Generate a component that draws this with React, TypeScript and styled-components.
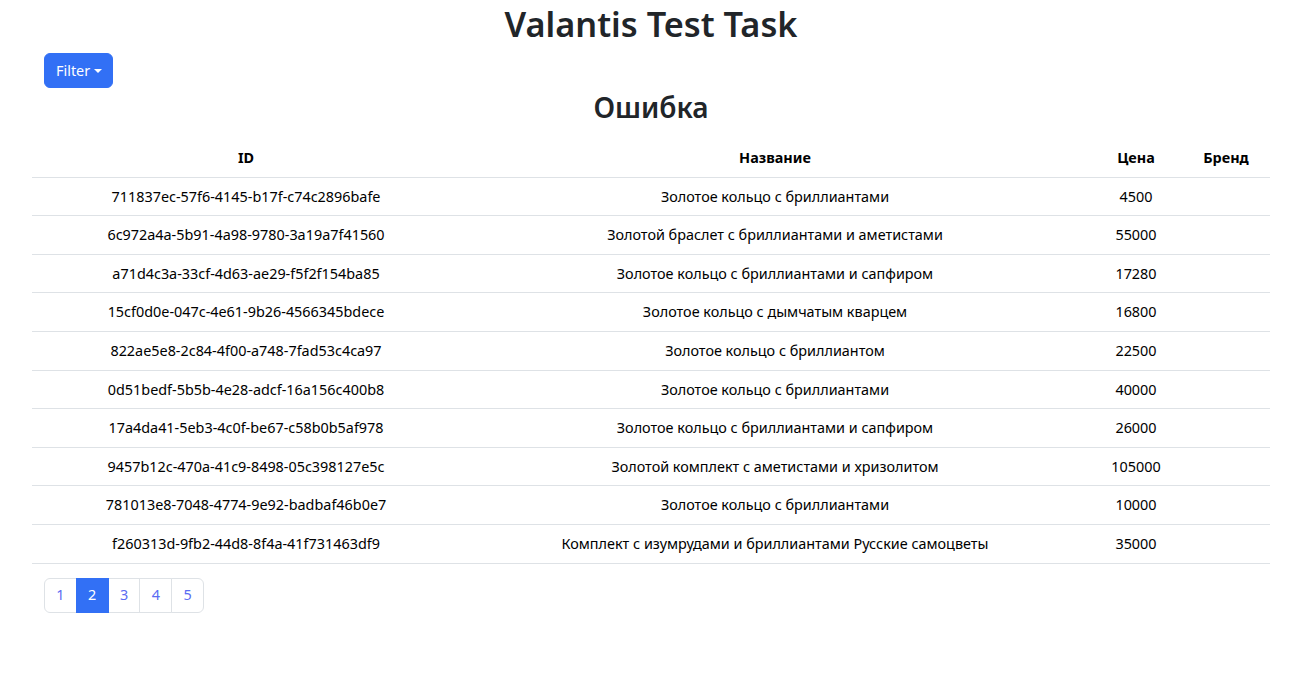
import React from "react";
import styled, { createGlobalStyle } from "styled-components";

const Global = createGlobalStyle`
  html, body { margin: 0; padding: 0; background: #fff; }
  body {
    font-family: "Noto Sans", "Open Sans", sans-serif;
    color: #212529;
    font-size: 14.4px;
    line-height: 1.5;
  }
  * { box-sizing: border-box; }
`;

const Page = styled.div`
  padding: 0 37px 0 32px;
`;

const Title = styled.h1`
  margin: 0 0 5px;
  font-size: 34.3px;
  font-weight: 600;
  line-height: 48px;
  text-align: center;
`;

const Toolbar = styled.div`
  display: flex;
  padding: 0 12px;
`;

const FilterButton = styled.button`
  display: inline-flex;
  align-items: center;
  gap: 4px;
  height: 35px;
  padding: 0 10px 0 11px;
  border: 1px solid #3270f5;
  border-radius: 6px;
  background: #3270f5;
  color: #fff;
  font-family: inherit;
  font-size: 14.4px;
  line-height: 1.5;
  cursor: pointer;
`;

const Caret = styled.span`
  width: 0;
  height: 0;
  border-left: 4px solid transparent;
  border-right: 4px solid transparent;
  border-top: 4px solid #fff;
  margin-top: 1px;
`;

const Subtitle = styled.h2`
  margin: 2px 0 14px;
  font-size: 28px;
  font-weight: 600;
  line-height: 35px;
  text-align: center;
`;

const Table = styled.table`
  width: 100%;
  border-collapse: collapse;
  table-layout: fixed;
`;

const Th = styled.th`
  padding: 8px;
  font-weight: 700;
  text-align: center;
  border-bottom: 1px solid #dee2e6;
  color: #000;
`;

const Td = styled.td`
  padding: 8px;
  text-align: center;
  border-bottom: 1px solid #dee2e6;
  color: #000;
  white-space: nowrap;
`;

const Pagination = styled.ul`
  display: flex;
  list-style: none;
  margin: 14px 12px 0;
  padding: 0;
`;

const PageLink = styled.li<{ $active?: boolean; $first?: boolean; $last?: boolean }>`
  height: 35px;
  width: 32.8px;
  display: flex;
  align-items: center;
  justify-content: center;
  border: 1px solid ${(p) => (p.$active ? "#3270f5" : "#dee2e6")};
  margin-left: ${(p) => (p.$first ? "0" : "-1px")};
  background: ${(p) => (p.$active ? "#3270f5" : "#fff")};
  color: ${(p) => (p.$active ? "#fff" : "#5b6cf3")};
  border-radius: ${(p) =>
    p.$first ? "6px 0 0 6px" : p.$last ? "0 6px 6px 0" : "0"};
  position: relative;
  z-index: ${(p) => (p.$active ? 1 : 0)};
  cursor: pointer;
`;

const rows: [string, string, number][] = [
  ["711837ec-57f6-4145-b17f-c74c2896bafe", "Золотое кольцо с бриллиантами", 4500],
  ["6c972a4a-5b91-4a98-9780-3a19a7f41560", "Золотой браслет с бриллиантами и аметистами", 55000],
  ["a71d4c3a-33cf-4d63-ae29-f5f2f154ba85", "Золотое кольцо с бриллиантами и сапфиром", 17280],
  ["15cf0d0e-047c-4e61-9b26-4566345bdece", "Золотое кольцо с дымчатым кварцем", 16800],
  ["822ae5e8-2c84-4f00-a748-7fad53c4ca97", "Золотое кольцо с бриллиантом", 22500],
  ["0d51bedf-5b5b-4e28-adcf-16a156c400b8", "Золотое кольцо с бриллиантами", 40000],
  ["17a4da41-5eb3-4c0f-be67-c58b0b5af978", "Золотое кольцо с бриллиантами и сапфиром", 26000],
  ["9457b12c-470a-41c9-8498-05c398127e5c", "Золотой комплект с аметистами и хризолитом", 105000],
  ["781013e8-7048-4774-9e92-badbaf46b0e7", "Золотое кольцо с бриллиантами", 10000],
  ["f260313d-9fb2-44d8-8f4a-41f731463df9", "Комплект с изумрудами и бриллиантами Русские самоцветы", 35000],
];

export default function App() {
  return (
    <Page>
      <Global />
      <Title>Valantis Test Task</Title>
      <Toolbar>
        <FilterButton>
          Filter
          <Caret />
        </FilterButton>
      </Toolbar>
      <Subtitle>Ошибка</Subtitle>
      <Table>
        <colgroup>
          <col style={{ width: 428 }} />
          <col style={{ width: 630 }} />
          <col style={{ width: 92 }} />
          <col style={{ width: 88 }} />
        </colgroup>
        <thead>
          <tr>
            <Th>ID</Th>
            <Th>Название</Th>
            <Th>Цена</Th>
            <Th>Бренд</Th>
          </tr>
        </thead>
        <tbody>
          {rows.map(([id, name, price]) => (
            <tr key={id}>
              <Td>{id}</Td>
              <Td>{name}</Td>
              <Td>{price}</Td>
              <Td></Td>
            </tr>
          ))}
        </tbody>
      </Table>
      <Pagination>
        {[1, 2, 3, 4, 5].map((n) => (
          <PageLink key={n} $active={n === 2} $first={n === 1} $last={n === 5}>
            {n}
          </PageLink>
        ))}
      </Pagination>
    </Page>
  );
}
